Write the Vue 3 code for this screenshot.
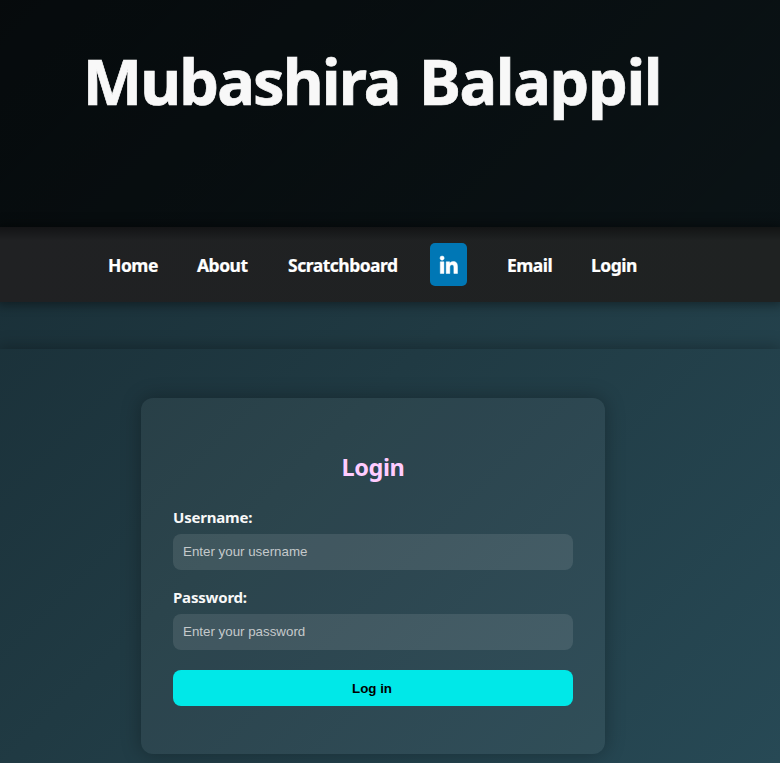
<script setup>
const links = [
  { label: 'Home', key: 'home' },
  { label: 'About', key: 'about' },
  { label: 'Scratchboard', key: 'scratchboard' },
  { label: 'LinkedIn', key: 'linkedin', icon: true },
  { label: 'Email', key: 'email' },
  { label: 'Login', key: 'login' },
]
</script>

<template>
  <div class="page">
    <header class="hero">
      <h1 class="name"><span class="first">Mubashira</span> <span class="last">Balappil</span></h1>
    </header>
    <nav class="nav">
      <a v-for="link in links" :key="link.key" href="#" class="link" :class="link.key">
        <svg v-if="link.icon" class="glyph" viewBox="0 0 448 448" aria-hidden="true">
          <path fill="#fff" stroke="#fff" stroke-width="12" d="M100.3 448H7.400V148.900h92.900zM53.800 108.100C24.100 108.100 0 83.500 0 53.800a53.800 53.800 0 0 1 107.600 0c0 29.700-24.100 54.300-53.800 54.300zM447.900 448h-92.700V302.400c0-34.700-.7-79.200-48.300-79.200-48.300 0-55.700 37.700-55.700 76.700V448h-92.800V148.900h89.100v40.800h1.300c12.400-23.500 42.700-48.300 87.900-48.300 94 0 111.300 61.900 111.300 142.300V448z" />
        </svg>
        <span v-else>{{ link.label }}</span>
      </a>
    </nav>
    <main class="content">
      <form class="card" @submit.prevent>
        <h2 class="title">Login</h2>
        <label class="label" for="username">Username:</label>
        <input id="username" class="field" type="text" placeholder="Enter your username" />
        <label class="label" for="password">Password:</label>
        <input id="password" class="field" type="password" placeholder="Enter your password" />
        <button class="submit" type="submit">Log in</button>
      </form>
    </main>
  </div>
</template>

<style>
body {
  margin: 0;
  overflow: hidden;
}
</style>

<style scoped>
.page {
  height: 763px;
  box-sizing: border-box;
  overflow: hidden;
  background: linear-gradient(135deg, #172b33 0%, #203a43 50%, #274955 100%);
  font-family: "Noto Sans", "Open Sans", sans-serif;
  color: #f8f8f8;
}
.hero {
  height: 227px;
  box-sizing: border-box;
  padding: 35px 36px 0 0;
  text-align: center;
  background: linear-gradient(135deg, rgba(0, 0, 0, 0.76), rgba(0, 0, 0, 0.7));
}
.name {
  margin: 0;
  font-size: 63px;
  line-height: 92px;
  font-weight: 700;
  white-space: nowrap;
  word-spacing: 3px;
  -webkit-text-stroke: 0.7px #f8f8f8;
}
.first {
  letter-spacing: -1.9px;
}
.last {
  letter-spacing: -1.4px;
}
.nav {
  height: 75px;
  box-sizing: border-box;
  padding-left: 108px;
  display: flex;
  align-items: center;
  background: linear-gradient(rgba(0, 0, 0, 0.4), rgba(0, 0, 0, 0) 14px), linear-gradient(90deg, #202123, #1f2222);
  box-shadow: 0 0 10px 3px rgba(0, 0, 0, 0.4);
}
.link {
  color: #fff;
  text-decoration: none;
  font-size: 17.500px;
  font-weight: 700;
  line-height: 27px;
  padding-top: 2px;
  letter-spacing: -0.5px;
  white-space: nowrap;
  -webkit-text-stroke: 0.2px #fff;
}
.home { width: 89px; }
.about { width: 91px; }
.scratchboard { width: 142px; }
.linkedin {
  width: 37px;
  height: 43px;
  box-sizing: border-box;
  margin-right: 40px;
  padding-top: 1px;
  border-radius: 5px;
  background: #0077b5;
  display: flex;
  align-items: center;
  justify-content: center;
}
.email { width: 84px; }
.glyph {
  width: 17.500px;
  height: 17.500px;
  overflow: visible;
}
.content {
  margin-top: 47px;
  height: 414px;
  box-sizing: border-box;
  padding: 49px 34px 0 0;
  box-shadow: 0 0 15px 2px rgba(0, 0, 0, 0.28);
}
.card {
  width: 464px;
  height: 356px;
  box-sizing: border-box;
  margin: 0 auto;
  padding: 52px 32px 0;
  border-radius: 12px;
  background: rgba(255, 255, 255, 0.05);
  box-shadow: 0 0 20px rgba(0, 0, 0, 0.3);
}
.title {
  margin: 0;
  height: 57px;
  line-height: 34px;
  font-size: 23.500px;
  font-weight: 700;
  letter-spacing: -0.4px;
  text-align: center;
  color: #fcf;
}
.label {
  display: block;
  height: 27px;
  font-size: 15px;
  line-height: 20px;
  font-weight: 700;
  letter-spacing: -0.2px;
}
.field {
  display: block;
  width: 400px;
  height: 36px;
  box-sizing: border-box;
  margin: 0 0 17px;
  padding: 0 10px 2px;
  border: 0;
  border-radius: 8px;
  background: rgba(255, 255, 255, 0.1);
  color: #fff;
  font: 13.333px "Liberation Sans", Arial, sans-serif;
}
.field::placeholder {
  color: #c5c9cb;
}
.submit {
  display: block;
  width: 400px;
  height: 36px;
  margin-top: 20px;
  padding: 0 2px 0 0;
  border: 0;
  border-radius: 8px;
  background: #00e8e8;
  color: #000;
  font: 700 13.333px "Liberation Sans", Arial, sans-serif;
}
</style>
